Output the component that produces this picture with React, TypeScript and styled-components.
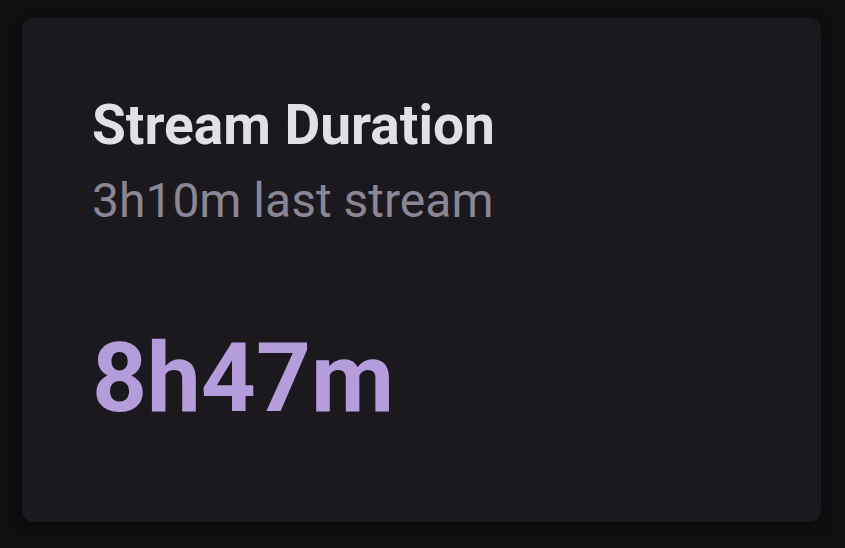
import React from "react"
import styled, { createGlobalStyle } from "styled-components"

const GlobalStyle = createGlobalStyle`
  html, body {
    margin: 0;
    padding: 0;
    background: #0f0f11;
    font-family: Roboto, "Noto Sans", sans-serif;
  }
`

const Page = styled.div`
  width: 845px;
  height: 548px;
  box-sizing: border-box;
  padding: 18px 24px 26px 22px;
  display: flex;
`

const Card = styled.div`
  flex: 1;
  background: #1b191e;
  border-radius: 12px;
  box-shadow: 0 4px 14px rgba(0, 0, 0, 0.35);
  padding: 74px 70px 0 70px;
  display: flex;
  flex-direction: column;
`

const Title = styled.div`
  font-size: 55px;
  font-weight: 700;
  color: #e2dfe6;
  line-height: 1.2;
`

const Subtitle = styled.div`
  font-size: 48px;
  font-weight: 400;
  color: #8a8694;
  line-height: 1.2;
  margin-top: 14px;
`

const Value = styled.div<{ $accent: string }>`
  font-size: 96px;
  font-weight: 700;
  color: ${({ $accent }) => $accent};
  line-height: 1.2;
  margin-top: 91px;
`

export default function App() {
  return (
    <>
      <GlobalStyle />
      <Page>
        <Card>
          <Title>Stream Duration</Title>
          <Subtitle>3h10m last stream</Subtitle>
          <Value $accent="#b39ddb">8h47m</Value>
        </Card>
      </Page>
    </>
  )
}
